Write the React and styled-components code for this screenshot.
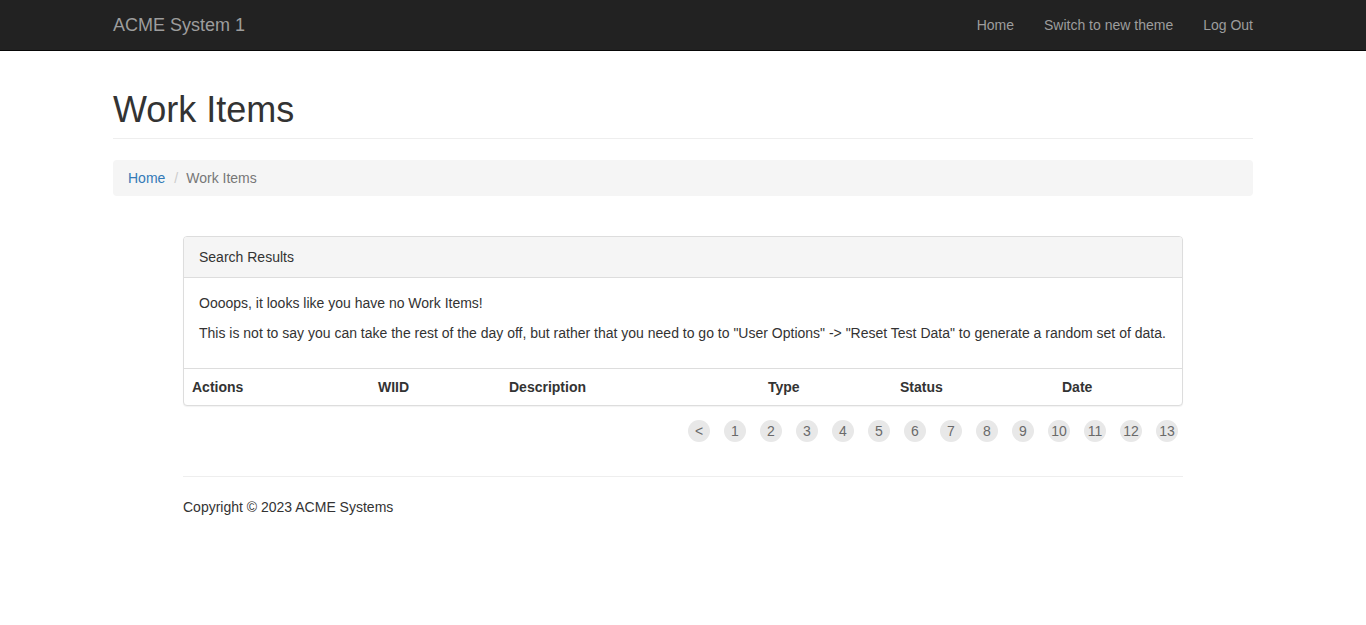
import React from "react";
import styled, { createGlobalStyle } from "styled-components";

const Global = createGlobalStyle`
  * { box-sizing: border-box; }
  html, body { margin: 0; padding: 0; background: #fff; }
  body {
    font-family: "Liberation Sans", Arial, Helvetica, sans-serif;
    font-size: 14px;
    line-height: 1.428571;
    color: #333;
  }
`;

const Navbar = styled.nav`
  background: #222;
  border-bottom: 1px solid #080808;
  height: 51px;
`;

const Container = styled.div`
  width: 1170px;
  margin: 0 auto;
  padding: 0 15px;
`;

const NavInner = styled(Container)`
  display: flex;
  align-items: center;
  justify-content: space-between;
  height: 50px;
`;

const Brand = styled.a`
  font-size: 18px;
  line-height: 20px;
  color: #9d9d9d;
  text-decoration: none;
`;

const NavList = styled.ul`
  display: flex;
  list-style: none;
  margin: 0 -15px 0 0;
  padding: 0;
`;

const NavLink = styled.a`
  display: block;
  padding: 15px;
  line-height: 20px;
  color: #9d9d9d;
  text-decoration: none;
`;

const PageHeader = styled.div`
  padding-bottom: 8px;
  border-bottom: 1px solid #eee;
`;

const Title = styled.h1`
  margin: 39px 0 0;
  font-size: 36px;
  font-weight: 500;
  line-height: 40px;
  color: #333;
`;

const Breadcrumb = styled.ol`
  display: flex;
  list-style: none;
  margin: 21px 0 40px;
  padding: 8px 15px;
  background: #f5f5f5;
  border-radius: 4px;
  line-height: 20px;
`;

const Crumb = styled.li`
  color: ${(p) => (p.$active ? "#777" : "#337ab7")};
`;

const Sep = styled.li`
  padding: 0 8px 0 9px;
  color: #ccc;
`;

const Narrow = styled.div`
  width: 1000px;
  margin: 0 auto;
`;

const Panel = styled.div`
  border: 1px solid #ddd;
  border-radius: 4px;
  background: #fff;
  box-shadow: 0 1px 1px rgba(0, 0, 0, 0.05);
  overflow: hidden;
`;

const PanelHeading = styled.div`
  background: #f5f5f5;
  border-bottom: 1px solid #ddd;
  padding: 10px 15px;
  line-height: 20px;
  color: #333;
`;

const PanelBody = styled.div`
  padding: 15px;
`;

const Para = styled.p`
  margin: 0 0 10px;
  line-height: 20px;
`;

const Table = styled.table`
  width: 100%;
  border-collapse: collapse;
  border-top: 1px solid #ddd;
`;

const Th = styled.th`
  text-align: left;
  font-weight: bold;
  padding: 8px;
  line-height: 20px;
  width: ${(p) => p.$w}px;
`;

const Pager = styled.ul`
  display: flex;
  justify-content: flex-end;
  gap: 14px;
  list-style: none;
  margin: 14px 5px 0 0;
  padding: 0;
`;

const PageDot = styled.li`
  width: 22px;
  height: 22px;
  border-radius: 50%;
  background: #e8e8e8;
  color: #6a6a6a;
  font-size: 14px;
  line-height: 22px;
  text-align: center;
`;

const Footer = styled.footer`
  margin-top: 34px;
  border-top: 1px solid #eee;
  padding-top: 20px;
  line-height: 20px;
`;

const cols = [
  ["Actions", 186],
  ["WIID", 131],
  ["Description", 259],
  ["Type", 132],
  ["Status", 162],
  ["Date", 128],
];

const pages = ["<", "1", "2", "3", "4", "5", "6", "7", "8", "9", "10", "11", "12", "13"];

export default function App() {
  return (
    <>
      <Global />
      <Navbar>
        <NavInner>
          <Brand href="#">ACME System 1</Brand>
          <NavList>
            <li><NavLink href="#">Home</NavLink></li>
            <li><NavLink href="#">Switch to new theme</NavLink></li>
            <li><NavLink href="#">Log Out</NavLink></li>
          </NavList>
        </NavInner>
      </Navbar>
      <Container>
        <PageHeader>
          <Title>Work Items</Title>
        </PageHeader>
        <Breadcrumb>
          <Crumb>Home</Crumb>
          <Sep aria-hidden="true">/</Sep>
          <Crumb $active>Work Items</Crumb>
        </Breadcrumb>
        <Narrow>
          <Panel>
            <PanelHeading>Search Results</PanelHeading>
            <PanelBody>
              <Para>Oooops, it looks like you have no Work Items!</Para>
              <Para>
                This is not to say you can take the rest of the day off, but rather that you need to go to "User Options" -&gt; "Reset Test Data" to generate a random set of data.
              </Para>
            </PanelBody>
            <Table>
              <thead>
                <tr>
                  {cols.map(([c, w]) => (
                    <Th key={c} $w={w}>{c}</Th>
                  ))}
                </tr>
              </thead>
            </Table>
          </Panel>
          <Pager>
            {pages.map((p) => (
              <PageDot key={p}>{p}</PageDot>
            ))}
          </Pager>
          <Footer>Copyright © 2023 ACME Systems</Footer>
        </Narrow>
      </Container>
    </>
  );
}
